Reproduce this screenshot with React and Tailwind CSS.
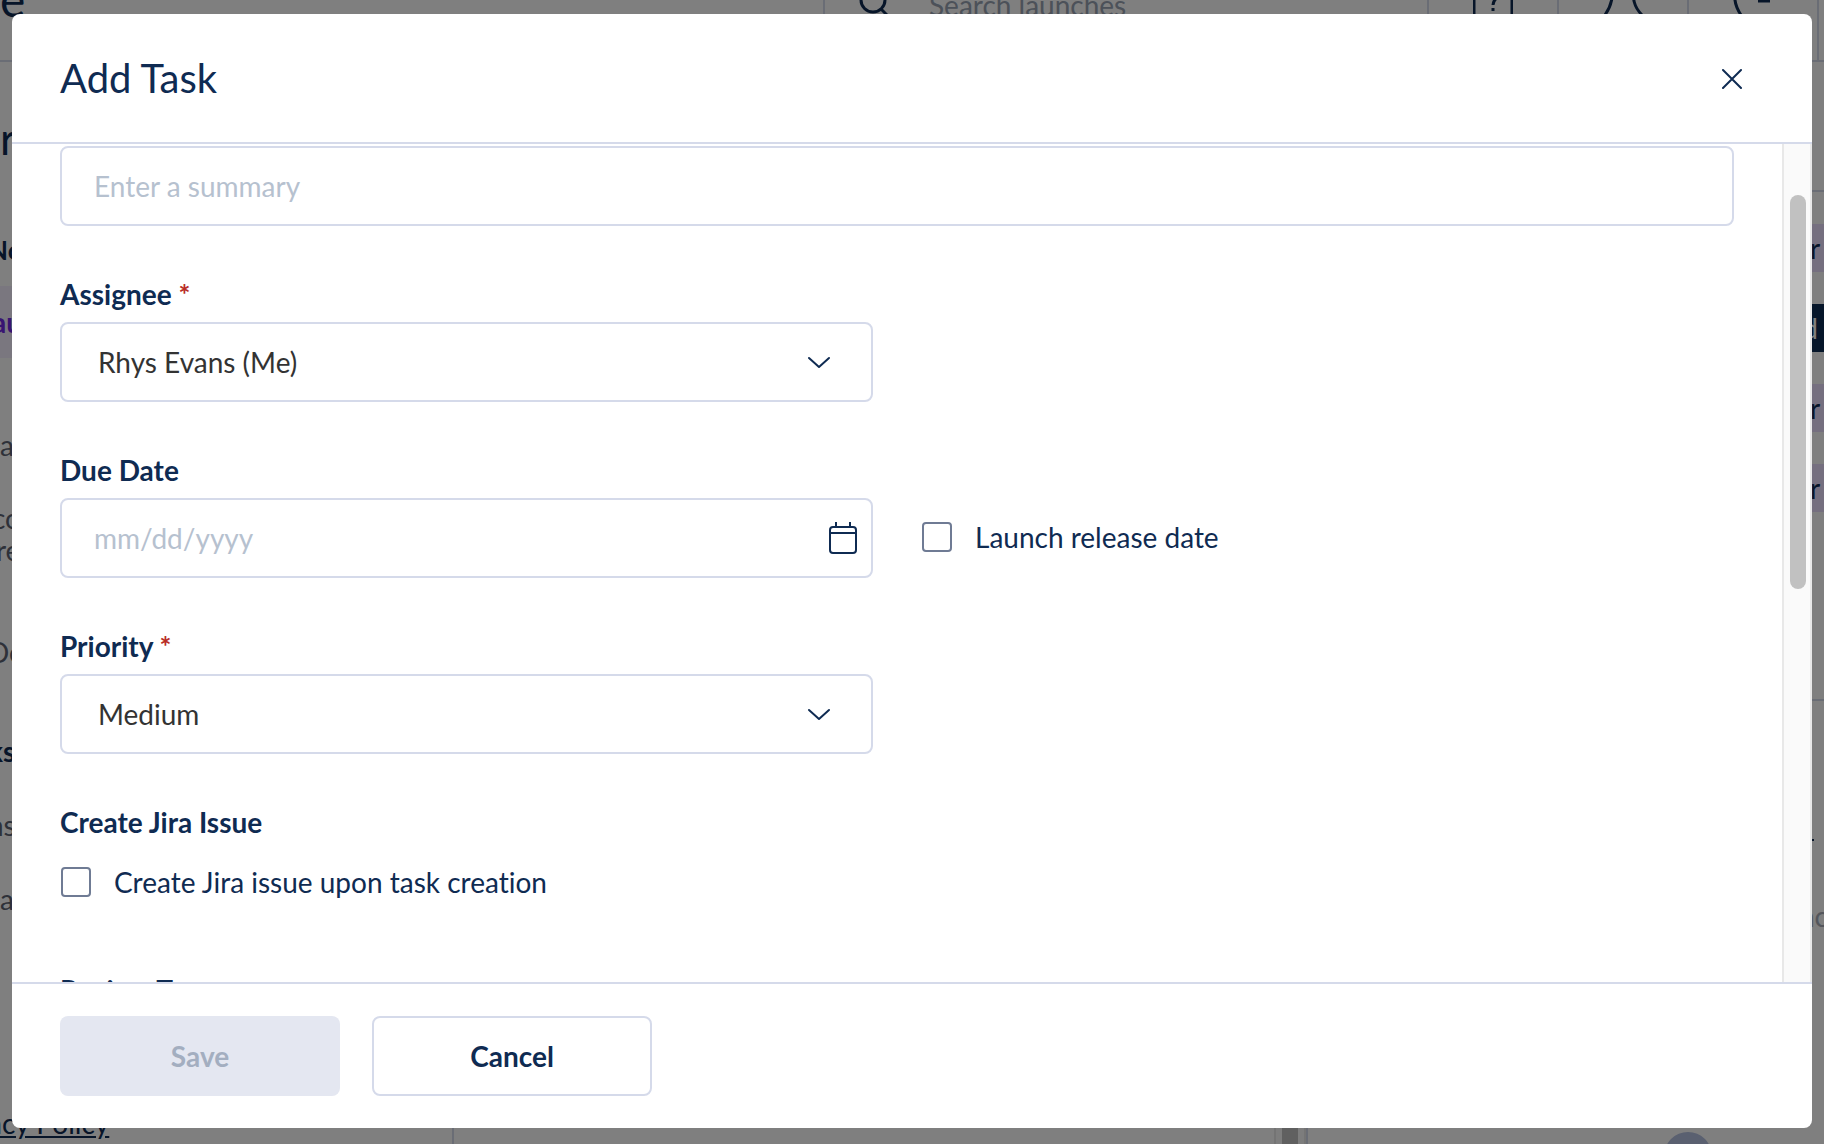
import React, { useState } from "react";

const Required = () => <span className="text-[#b92d27]"> *</span>;

const Field = ({ id, label, required, children }) => (
    <div className="flex flex-col gap-[10px]">
        {label && (
            <label htmlFor={id} className="text-[28px] leading-9 font-bold">
                {label}{required && <Required />}
            </label>
        )}
        {children}
    </div>
);

const Select = ({ id, value, options, onChange }) => (
    <div className="relative">
        <select
            id={id}
            value={value}
            onChange={(e) => onChange(e.target.value)}
            className="h-20 w-full appearance-none rounded-lg border-2 border-[#d5daea] bg-white pl-9 text-[28px] text-[#333333]"
        >
            {options.map((o) => <option key={o}>{o}</option>)}
        </select>
        <svg className="pointer-events-none absolute top-1/2 right-[42px] -mt-2 h-4 w-6" viewBox="0 0 24 16" fill="none" stroke="#0f2b52" strokeWidth="2" strokeLinecap="round" strokeLinejoin="round">
            <path d="M2 4l10 9 10-9" />
        </svg>
    </div>
);

const Checkbox = ({ label, checked, onChange }) => (
    <label className="flex items-center gap-[23px] text-[28px] leading-9">
        <input
            type="checkbox"
            checked={checked}
            onChange={(e) => onChange(e.target.checked)}
            className="ml-px size-[30px] appearance-none rounded border-2 border-[#6f7b94] bg-white checked:bg-[#0f2b52]"
        />
        {label}
    </label>
);

// dimmed page under the dialog
const LaunchPage = () => (
    <div aria-hidden="true" className="absolute inset-0 flex flex-col overflow-hidden bg-white">
        <div className="-mt-[62px] flex h-[124px] shrink-0 border-b-2 border-[#d5daea] text-[28px]">
            <div className="flex flex-1 items-center text-[48px]">e</div>
            <div className="flex w-[604px] items-center gap-10 border-l-2 border-[#d5daea] pt-3 pl-8 text-[#98a3b3]">
                <svg className="size-8" viewBox="0 0 32 32" fill="none" stroke="#0f2b52" strokeWidth="3">
                    <circle cx="16" cy="11" r="12" />
                    <path d="M24 20l8 8" />
                </svg>
                Search launches
            </div>
            <div className="flex w-[130px] items-center justify-center border-l-2 border-[#d5daea]">
                <svg className="h-12 w-10" viewBox="0 0 40 48" fill="none" stroke="#0f2b52" strokeWidth="3">
                    <path d="M1 4h38v40H1z" />
                    <path d="M16 20c0-7 9-7 9-1 0 5-5 5-5 11M20 33v3" />
                </svg>
            </div>
            <div className="flex w-[130px] items-center justify-center border-l-2 border-[#d5daea]">
                <svg className="h-12 w-10" viewBox="0 0 40 48" fill="none" stroke="#0f2b52" strokeWidth="3">
                    <path d="M9 8c1 14 0 22-7 32M31 8c-2 16 0 24 8 32" />
                </svg>
            </div>
            <div className="flex w-[130px] items-center justify-center border-l-2 border-[#d5daea]">
                <svg className="h-12 w-10" viewBox="0 0 40 48" fill="none" stroke="#0f2b52" strokeWidth="3">
                    <path d="M8 6c-8 10-8 22 0 34M25 26h12" />
                </svg>
            </div>
            <div className="w-[7px] border-l-2 border-[#d5daea]" />
        </div>
        <div className="flex min-h-0 flex-1">
            <div className="flex w-[454px] flex-col border-r-2 border-[#d5daea] text-[28px] leading-8 whitespace-nowrap text-[#5d6373]">
                <div className="flex h-[152px] items-center text-[44px] text-[#0f2b52]">r</div>
                <div className="-ml-3 flex h-[72px] items-center text-[26px] font-bold text-[#0f2b52]">No</div>
                <div className="flex h-[72px] items-center bg-[#f4effe] font-bold text-[#7028e4]">
                    <span className="-ml-2">au</span>
                </div>
                <div className="mt-[71px]">a</div>
                <div className="mt-[41px] -ml-2">co</div>
                <div className="-ml-1">re</div>
                <div className="mt-[70px] -ml-3">De</div>
                <div className="mt-[67px] -ml-3 font-bold text-[#0f2b52]">ks</div>
                <div className="mt-[42px] -ml-3">ns</div>
                <div className="mt-[42px]">a.</div>
                <a href="#privacy" tabIndex={-1} className="mt-auto mb-[5px] -ml-3 text-[#0f2b52] underline">acy Policy</a>
            </div>
            <div className="flex-1" />
            <div className="flex w-8 justify-center border-r-2 border-l-2 border-[#e8e8e8] bg-[#fafafa]">
                <div className="w-4 bg-[#c1c1c1]" />
            </div>
            <div className="flex w-[518px] flex-col border-l-2 border-[#d5daea] text-[28px]">
                <div className="h-[130px] border-b-2 border-[#d5daea]" />
                <div className="mt-8 flex h-[477px] flex-col items-end gap-8 border-b-2 border-[#d5daea] leading-[48px]">
                    <div className="w-[14px] bg-[#eadeff]">r</div>
                    <div className="flex w-[14px] justify-end bg-[#0c2c54] pr-[6px] text-white">d</div>
                    <div className="w-[14px] bg-[#eadeff]">r</div>
                    <div className="w-[14px] bg-[#eadeff]">r</div>
                </div>
                <div className="mt-[138px] mr-[10px] h-[2px] w-6 self-end bg-[#0f2b52]" />
                <div className="mt-[54px] -mr-1 self-end text-[#a9adb8]">nc</div>
                <div className="mt-auto mr-28 -mb-9 size-12 self-end rounded-full bg-[#b4c0e0]" />
            </div>
        </div>
    </div>
);

const App = () => {
    const [task, setTask] = useState({
        summary: '',
        assignee: 'Rhys Evans (Me)',
        dueDate: '',
        useReleaseDate: false,
        priority: 'Medium',
        createJira: false
    });

    const onChangeValue = (value, type) => {
        setTask(prev => ({ ...prev, [type]: value }));
    }

    return (
        <div className="relative h-screen overflow-hidden font-['Lato',sans-serif] text-[#0f2b52] [font-variant-ligatures:none]">
            <LaunchPage />
            <div className="absolute inset-0 flex bg-black/50 px-3 pt-[14px] pb-4">
                <div role="dialog" aria-labelledby="dialog-title" className="flex min-w-0 flex-1 flex-col overflow-hidden rounded-lg bg-white">
                    <header className="flex h-[130px] shrink-0 items-center justify-between border-b-2 border-[#d5daea] pr-[60px] pl-12">
                        <h1 id="dialog-title" className="text-[40px]">Add Task</h1>
                        <button type="button" aria-label="Close" className="flex size-10 items-center justify-center">
                            <svg className="size-[22px]" viewBox="0 0 22 22" fill="none" stroke="#0f2b52" strokeWidth="2" strokeLinecap="round">
                                <path d="M2 3l18 18M20 3L2 21" />
                            </svg>
                        </button>
                    </header>

                    <div className="flex min-h-0 flex-1">
                        <form className="flex min-w-0 flex-1 flex-col gap-[50px] overflow-hidden px-12 pt-[2px]">
                            <input
                                aria-label="Summary"
                                placeholder="Enter a summary"
                                value={task.summary}
                                onChange={(e) => onChangeValue(e.target.value, 'summary')}
                                className="h-20 shrink-0 rounded-lg border-2 border-[#d5daea] px-8 text-[28px] placeholder:text-[#b6c1cf]"
                            />
                            <div className="grid grid-cols-2 gap-12">
                                <Field id="assignee" label="Assignee" required>
                                    <Select id="assignee" value={task.assignee} options={['Rhys Evans (Me)']} onChange={(v) => onChangeValue(v, 'assignee')} />
                                </Field>
                            </div>
                            <div className="grid grid-cols-2 items-end gap-12">
                                <Field id="due-date" label="Due Date">
                                    <div className="flex h-20 items-center rounded-lg border-2 border-[#d5daea] pr-3 pl-8">
                                        <input
                                            id="due-date"
                                            placeholder="mm/dd/yyyy"
                                            value={task.dueDate}
                                            onChange={(e) => onChangeValue(e.target.value, 'dueDate')}
                                            className="h-full min-w-0 flex-1 text-[28px] placeholder:text-[#b6c1cf]"
                                        />
                                        <button type="button" aria-label="Pick a date">
                                            <svg className="size-8" viewBox="0 0 32 32" fill="none" stroke="#0f2b52" strokeWidth="2">
                                                <rect x="3" y="5" width="26" height="26" rx="3" />
                                                <path d="M3 11h26M9 0v5M23 0v5" />
                                            </svg>
                                        </button>
                                    </div>
                                </Field>
                                <div className="flex h-20 items-center pb-[2px]">
                                    <Checkbox label="Launch release date" checked={task.useReleaseDate} onChange={(v) => onChangeValue(v, 'useReleaseDate')} />
                                </div>
                            </div>
                            <div className="grid grid-cols-2 gap-12">
                                <Field id="priority" label="Priority" required>
                                    <Select id="priority" value={task.priority} options={['High', 'Medium', 'Low']} onChange={(v) => onChangeValue(v, 'priority')} />
                                </Field>
                            </div>
                            <fieldset className="mb-[22px]">
                                <legend className="mb-6 text-[28px] leading-9 font-bold">Create Jira Issue</legend>
                                <Checkbox label="Create Jira issue upon task creation" checked={task.createJira} onChange={(v) => onChangeValue(v, 'createJira')} />
                            </fieldset>
                            <div className="text-[28px] leading-9 font-bold">Review Type</div>
                        </form>
                        {/* scroll track */}
                        <div className="flex w-[30px] shrink-0 justify-end border-x-2 border-[#e8e8e8] bg-[#fafafa] pt-[51px] pr-1">
                            <div className="h-1/2 w-4 rounded-full bg-[#c1c1c1]" />
                        </div>
                    </div>

                    <footer className="flex shrink-0 gap-8 border-t-2 border-[#d5daea] px-12 py-8">
                        <button type="button" disabled className="h-20 w-[280px] rounded-lg bg-[#e4e7f1] text-[28px] font-bold text-[#a3aec0]">Save</button>
                        <button type="button" className="h-20 w-[280px] rounded-lg border-2 border-[#d5daea] bg-white text-[28px] font-bold">Cancel</button>
                    </footer>
                </div>
            </div>
        </div>
    );
}

export default App;
